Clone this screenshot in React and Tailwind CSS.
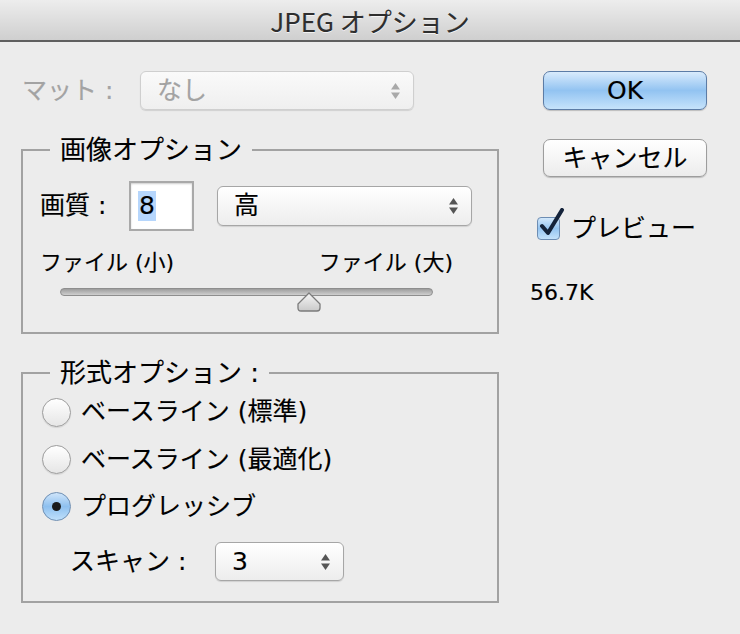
import React from "react";

const Arrows = ({ dim }) => (
  <svg width="11" height="18" viewBox="0 0 11 18" className="shrink-0">
    <path d="M5.5 1 L10 7.5 L1 7.5 Z" fill={dim ? "#a9a9a9" : "#555"} />
    <path d="M5.5 17 L10 10.5 L1 10.5 Z" fill={dim ? "#a9a9a9" : "#555"} />
  </svg>
);

const Select = ({ value, dim, className }) => (
  <div
    className={`flex items-center justify-between rounded-[6px] border pl-[16px] pr-[12px] bg-gradient-to-b shadow-[0_1px_1px_rgba(0,0,0,0.12)] ${
      dim
        ? "border-[#cfcfcf] from-[#fafafa] to-[#efefef] text-[#a3a3a3]"
        : "border-[#a6a6a6] from-[#ffffff] to-[#ededed] text-black"
    } ${className}`}
  >
    <span>{value}</span>
    <Arrows dim={dim} />
  </div>
);

const Radio = ({ checked }) =>
  checked ? (
    <div className="w-[29px] h-[29px] rounded-full border border-[#6f8fb3] bg-gradient-to-b from-[#cfe5fa] via-[#8ec0ef] to-[#bfe0fb] flex items-center justify-center shrink-0">
      <div className="w-[9px] h-[9px] rounded-full bg-[#1b1b1b]" />
    </div>
  ) : (
    <div className="w-[29px] h-[29px] rounded-full border border-[#9c9c9c] bg-gradient-to-b from-[#ffffff] to-[#e6e6e6] shadow-[0_1px_1px_rgba(0,0,0,0.1)] shrink-0" />
  );

const Legend = ({ children }) => (
  <legend className="ml-[27px] px-[10px] text-[26px] leading-[30px] text-black">
    {children}
  </legend>
);

export default function App() {
  return (
    <div className="w-[740px] h-[634px] overflow-hidden bg-[#ececec] font-['DejaVu_Sans','Noto_Sans_CJK_JP',sans-serif] text-[25px] text-black [-webkit-text-stroke:0.15px_currentColor]">
      <div className="h-[42px] border-b-2 border-[#5f5f5f] bg-gradient-to-b from-[#ededed] to-[#cfcfcf] flex items-center justify-center">
        <span className="font-['Noto_Sans_CJK_JP',sans-serif] text-[26px] text-[#2e2e2e] [text-shadow:0_1px_0_rgba(255,255,255,0.7)]">
          JPEG オプション
        </span>
      </div>

      <div className="flex">
        <div className="w-[478px] ml-[21px]">
          <div className="mt-[29px] h-[39px] flex items-center">
            <span className="w-[119px] pl-px text-[#a3a3a3]">マット :</span>
            <Select value="なし" dim className="w-[274px] h-[39px]" />
          </div>

          <fieldset className="mt-[25px] border-2 border-[#a2a2a2] pb-[21px]">
            <Legend>画像オプション</Legend>
            <div className="mt-[16px] h-[50px] flex items-center pl-[17px]">
              <span className="w-[89px]">画質 :</span>
              <div className="w-[65px] h-[50px] bg-white border-2 border-[#a9a9a9] shadow-[inset_0_1px_2px_rgba(0,0,0,0.2)] flex items-center pl-[7px]">
                <span className="bg-[#b6d6fc] px-[1px] leading-[30px]">8</span>
              </div>
              <Select value="高" className="ml-[23px] w-[255px] h-[40px]" />
            </div>
            <div className="mt-[19px] h-[24px] flex items-center justify-between pl-[17px] pr-[44px] text-[22px]">
              <span>ファイル (小)</span>
              <span>ファイル (大)</span>
            </div>
            <div className="relative mt-[14px] ml-[37px] w-[373px] h-[23px]">
              <div className="h-[8px] rounded-full border border-[#8e8e8e] bg-gradient-to-b from-[#9d9d9d] to-[#cfcfcf]" />
              <svg
                width="26"
                height="20"
                viewBox="0 0 26 20"
                className="absolute left-[236px] top-[4px]"
              >
                <defs>
                  <linearGradient id="th" x1="0" y1="0" x2="0" y2="1">
                    <stop offset="0" stopColor="#f7f7f7" />
                    <stop offset="1" stopColor="#c9c9c9" />
                  </linearGradient>
                </defs>
                <path
                  d="M13 1 L24 12 L24 16 Q24 19 21 19 L5 19 Q2 19 2 16 L2 12 Z"
                  fill="url(#th)"
                  stroke="#7b7b7b"
                  strokeWidth="1.3"
                  strokeLinejoin="round"
                />
              </svg>
            </div>
          </fieldset>

          <fieldset className="mt-[24px] border-2 border-[#a2a2a2] pb-[20px]">
            <Legend>形式オプション :</Legend>
            <div className="pl-[19px]">
              <div className="h-[48px] flex items-center gap-[10px]">
                <Radio />
                <span>ベースライン (標準)</span>
              </div>
              <div className="h-[47px] flex items-center gap-[10px]">
                <Radio />
                <span>ベースライン (最適化)</span>
              </div>
              <div className="h-[47px] flex items-center gap-[10px]">
                <Radio checked />
                <span>プログレッシブ</span>
              </div>
            </div>
            <div className="mt-[12px] h-[39px] flex items-center pl-[47px]">
              <span className="w-[145px]">スキャン :</span>
              <Select value="3" className="w-[129px] h-[39px]" />
            </div>
          </fieldset>
        </div>

        <div className="ml-[31px] w-[180px]">
          <button className="mt-[29px] ml-[13px] w-[164px] h-[39px] rounded-[7px] border border-[#5c7ca6] bg-gradient-to-b from-[#d9ebfc] via-[#92c3f1] to-[#c6e3fb] shadow-[0_1px_1px_rgba(0,0,0,0.2)] text-black">
            OK
          </button>
          <button className="mt-[29px] ml-[13px] w-[164px] h-[38px] rounded-[7px] border border-[#9d9d9d] bg-gradient-to-b from-[#ffffff] to-[#ececec] shadow-[0_1px_1px_rgba(0,0,0,0.2)] text-black">
            キャンセル
          </button>
          <div className="mt-[38px] ml-[7px] h-[26px] flex items-center gap-[11px]">
            <div className="relative w-[23px] h-[23px] rounded-[4px] border border-[#6d8db3] bg-gradient-to-b from-[#d3e8fb] via-[#94c4f0] to-[#c4e2fb] shrink-0">
              <svg
                width="28"
                height="30"
                viewBox="0 0 28 30"
                className="absolute left-[0px] top-[-10px]"
              >
                <path
                  d="M4 18 L10 25 L24 2"
                  fill="none"
                  stroke="#14233a"
                  strokeWidth="4"
                  strokeLinecap="round"
                  strokeLinejoin="round"
                />
              </svg>
            </div>
            <span>プレビュー</span>
          </div>
          <div className="mt-[34px] text-[22px]">56.7K</div>
        </div>
      </div>
    </div>
  );
}
